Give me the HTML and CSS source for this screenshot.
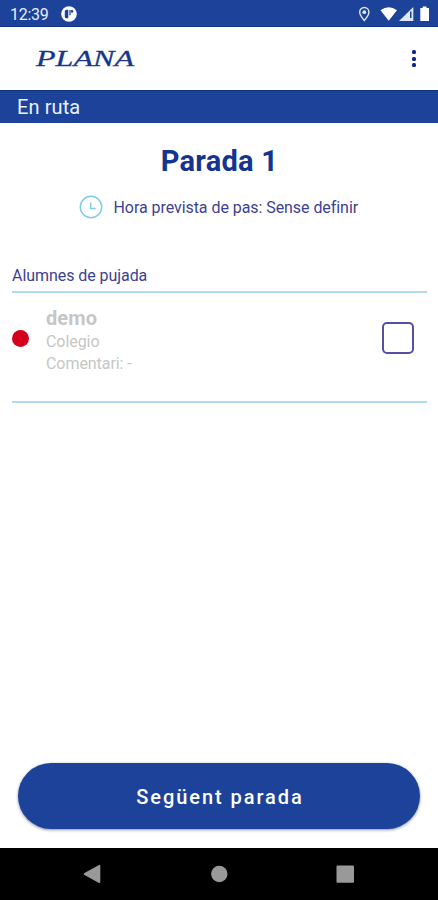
FILE: index.html
```html
<!DOCTYPE html>
<html lang="ca">
<head>
<meta charset="utf-8">
<title>Plana</title>
<link rel="stylesheet" href="styles.css">
</head>
<body>
<div class="screen">
  <div class="status">
    <span class="time">12:39</span>
    <svg class="app-icon" width="16" height="16" viewBox="0 0 16 16"><circle cx="8" cy="8" r="7.800" fill="#fff"/><path d="M5.300 3.700h2v8.600h-2a1.500 1.500 0 0 1-1.500-1.500V5.200a1.500 1.500 0 0 1 1.500-1.500z" fill="#1c4299"/><path d="M8.400 4h1.200v5.200H8.400z" fill="#1c4299"/><circle cx="11" cy="5.400" r="1.300" fill="#1c4299"/></svg>
    <svg class="status-icons" width="74" height="18" viewBox="0 0 74 18">
      <path d="M7.300 2.500a4.600 4.600 0 0 0-4.600 4.600c0 3.400 4.600 8.300 4.600 8.300s4.600-4.900 4.600-8.300a4.600 4.600 0 0 0-4.600-4.600z" fill="none" stroke="#dfe6f5" stroke-width="1.400"/><circle cx="7.300" cy="7.200" r="1.900" fill="#dfe6f5"/>
      <path d="M23.500 5.200Q31.700-.7 40 5.200L31.700 15.800z" fill="#fff"/>
      <path d="M56.300 2v14H42z" fill="#dfe6f5"/><path d="M53 6.500h1.500v6.500H53z" fill="#1c4299"/>
      <path d="M65.700 1.500h3.800v1.600h2.500v13h-8.700v-13h2.400z" fill="#fff"/>
    </svg>
  </div>
  <header class="appbar">
    <svg class="logo" width="104" height="26" viewBox="0 0 104 26"><text class="logo-text" x="2" y="20" textLength="98" lengthAdjust="spacingAndGlyphs">PLANA</text></svg>
    <div class="menu"><i></i><i></i><i></i></div>
  </header>
  <div class="banner">En ruta</div>
  <main>
    <h1>Parada 1</h1>
    <div class="eta">
      <svg width="24" height="24" viewBox="0 0 24 24" fill="none" stroke="#7fcbea" stroke-width="1.500"><circle cx="12" cy="12" r="10.700"/><path d="M11.700 7.500V13.500h5"/></svg>
      <span class="eta-text">Hora prevista de pas: Sense definir</span>
    </div>
    <h2>Alumnes de pujada</h2>
    <div class="student">
      <span class="dot"></span>
      <div class="info">
        <div class="name">demo</div>
        <div>Colegio</div>
        <div>Comentari: -</div>
      </div>
      <span class="check"></span>
    </div>
  </main>
  <button class="next">Següent parada</button>
  <nav>
    <svg width="438" height="52" viewBox="0 0 438 52" fill="#999"><path d="M84 25.200 99 17q1.300-.3 1.300 1v16q0 1.300-1.300 1L84 26.800q-1-.8 0-1.600z"/><circle cx="219.300" cy="26" r="8.200"/><rect x="336.500" y="17.500" width="17.500" height="17.300" rx="1"/></svg>
  </nav>
</div>
</body>
</html>
```

FILE: styles.css
```css
* { box-sizing: border-box; }
body { margin: 0; font-family: Roboto, sans-serif; background: #fff; }
.screen { width: 438px; height: 900px; display: flex; flex-direction: column; overflow: hidden; }
.status { height: 27px; background: #1c4299; border-bottom: 1px solid #123583; display: flex; align-items: center; padding: 2px 7px 0 10px; color: #e9eefa; }
.time { font-size: 16px; letter-spacing: -.3px; width: 51px; }
.status-icons { margin-left: auto; }
.appbar { height: 63px; display: flex; align-items: center; padding: 0 22.500px 0 34px; }
.logo { display: block; overflow: visible; }
.logo-text { font: italic 24px "Liberation Serif", serif; fill: #17378c; stroke: #17378c; stroke-width: .3px; }
.menu { margin-left: auto; display: flex; flex-direction: column; gap: 2.700px; }
.menu i { width: 4px; height: 4px; border-radius: 1.500px; background: #10288c; }
.banner { height: 33px; background: #1c4299; border-top: 1px solid #123583; color: #edf1fb; font-size: 20px; line-height: 33px; padding-left: 17px; letter-spacing: .1px; }
main { flex: 1; padding: 0 11px 0 12px; color: #3d3f93; }
h1 { margin: 21px 0 0; font-size: 29px; line-height: 34px; font-weight: 700; text-align: center; letter-spacing: .25px; color: #14348f; }
.eta { display: flex; align-items: center; height: 24px; margin-top: 17px; padding-left: 67px; gap: 10.500px; }
.eta-text { font-size: 16px; letter-spacing: -.06px; white-space: nowrap; padding-top: 1px; }
h2 { margin: 47px 0 0; height: 25px; font-size: 16px; line-height: 20px; font-weight: 400; letter-spacing: -.06px; }
.student { height: 112px; border-top: 2px solid #b0dbee; border-bottom: 2px solid #b0dbee; display: flex; }
.dot { width: 17px; height: 17px; border-radius: 50%; background: #d5001c; margin-top: 37px; }
.info { margin: 12px 0 0 17px; font-size: 16px; line-height: 22px; letter-spacing: -.06px; color: #c6c6c6; }
.name { font-size: 20px; line-height: 26px; font-weight: 700; letter-spacing: .1px; }
.check { width: 32px; height: 32px; border: 2px solid #5550a0; border-radius: 5px; margin: 29px 13px 0 auto; }
.next { width: 402px; height: 66px; margin: 0 0 19px 18px; border: 0; border-radius: 33px; background: #1c4299; color: #fff; font: 500 20px Roboto, sans-serif; letter-spacing: 1.930px; padding: 2px 0 0 2px; box-shadow: 0 1px 3px rgba(20, 25, 70, .5); }
nav { height: 52px; background: #000; }
nav svg { display: block; }
```
